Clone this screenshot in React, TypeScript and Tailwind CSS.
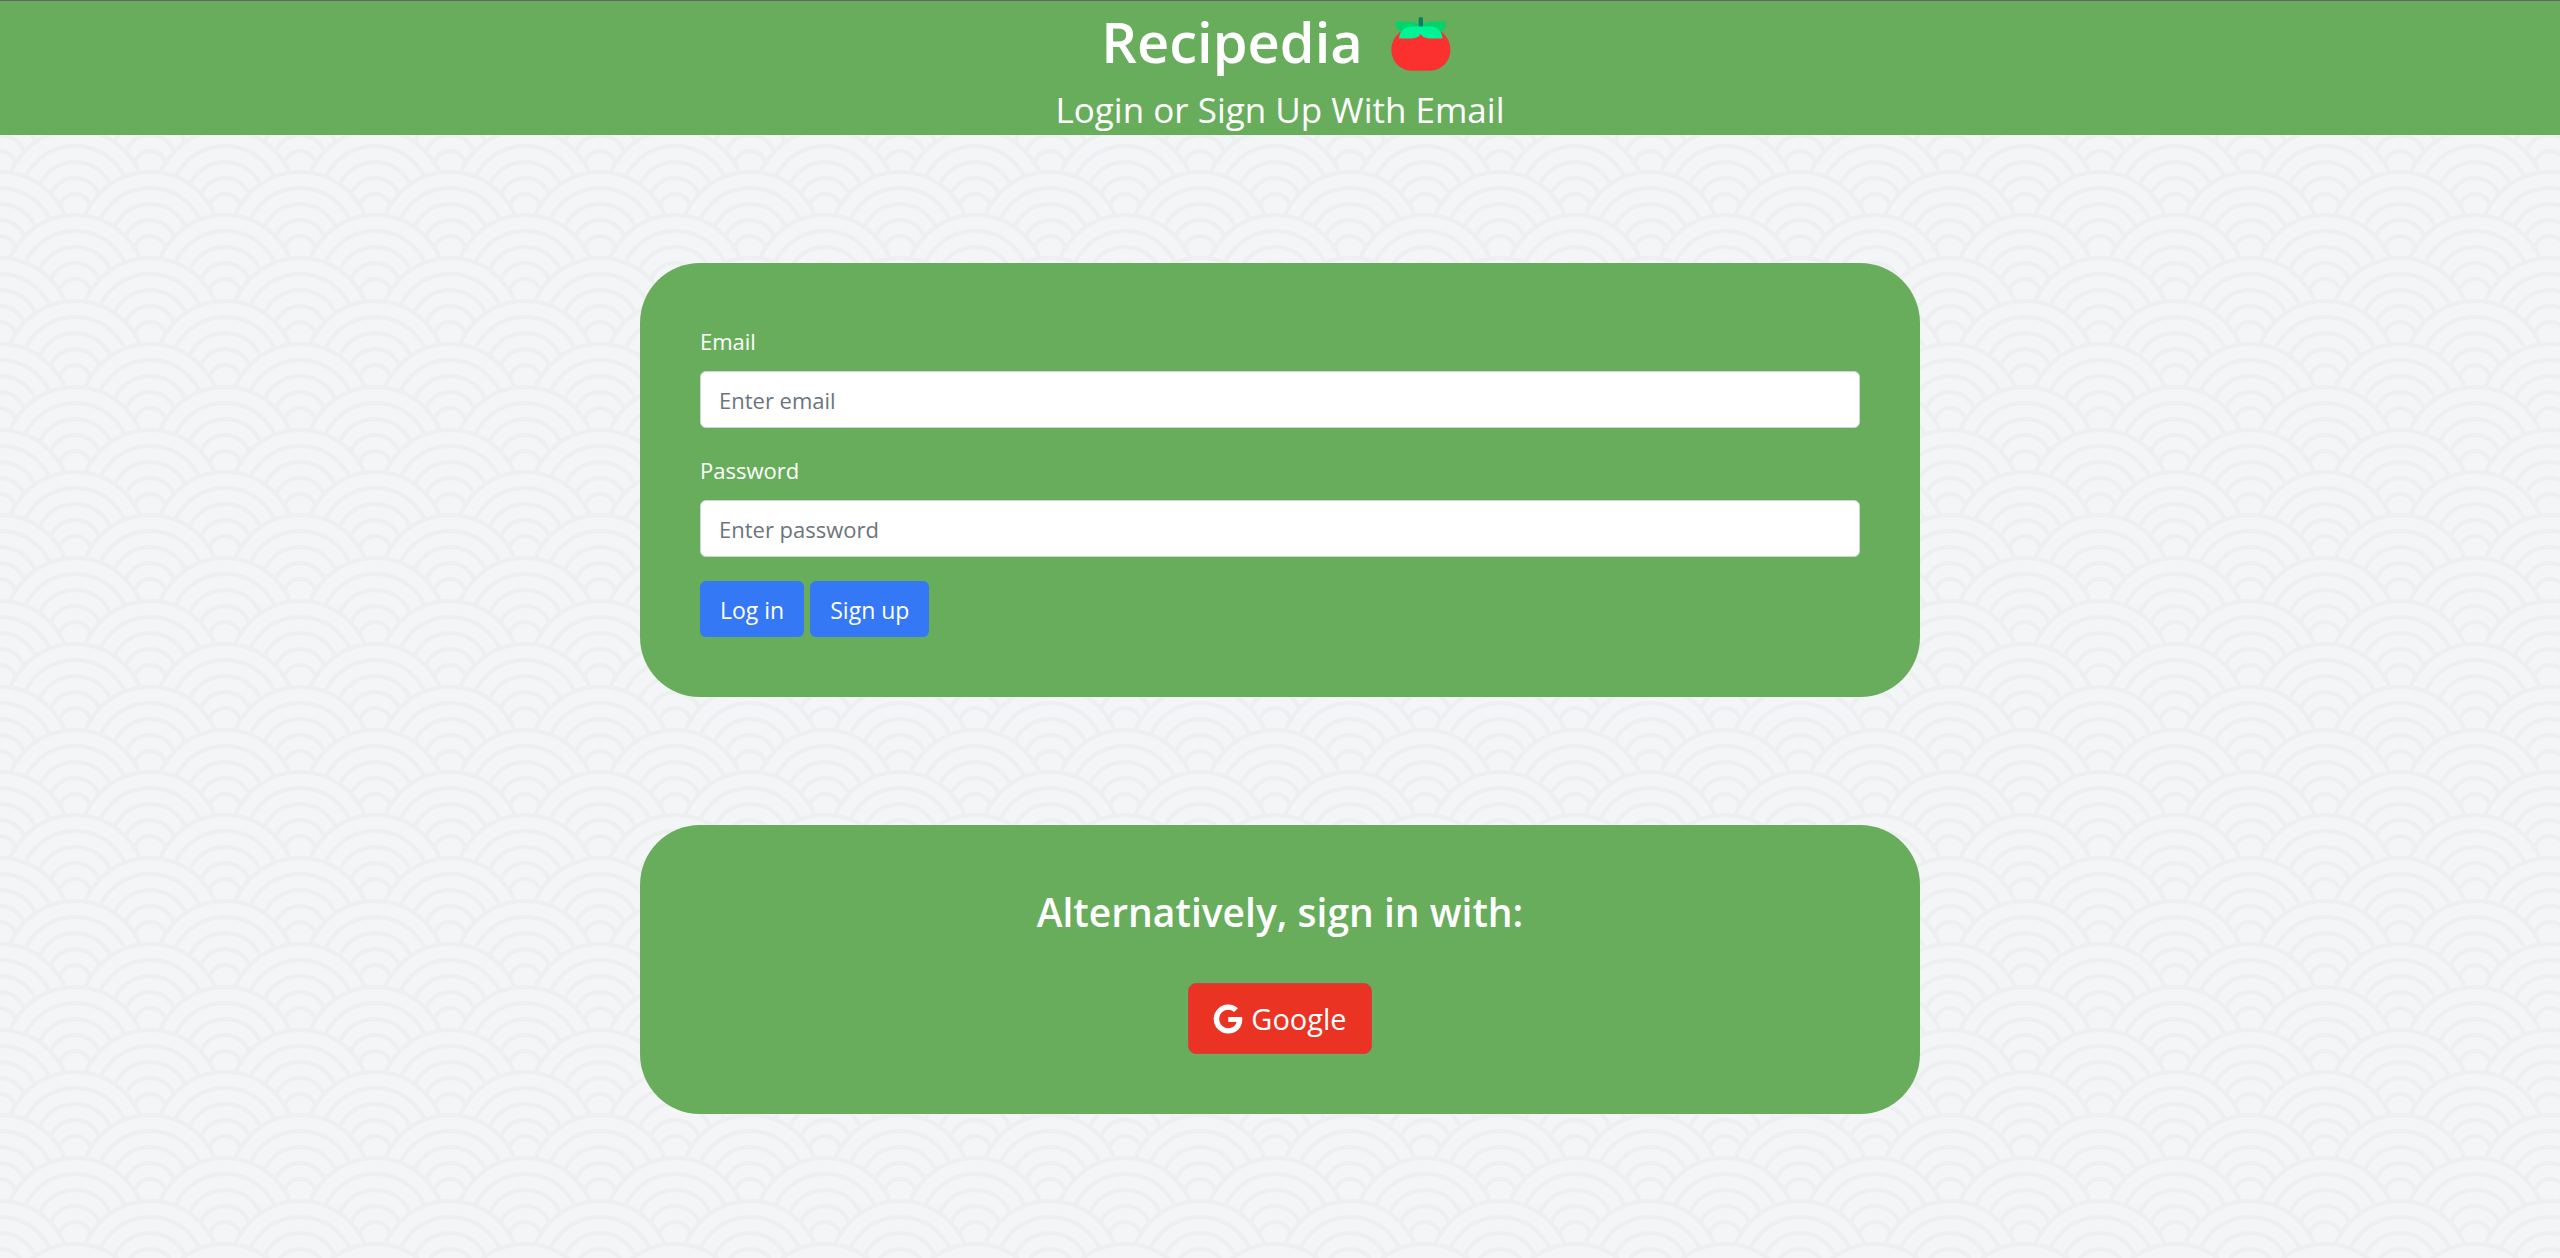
import { useId } from "react";
import type { ButtonHTMLAttributes, InputHTMLAttributes, ReactNode } from "react";
import { FaGoogle } from "react-icons/fa";

// One scale is five nested arcs; r is the arc's radius and cy its centre below the crest.
const RINGS = [
  { r: 70, cy: 70 },
  { r: 55, cy: 71 },
  { r: 39, cy: 71 },
  { r: 26, cy: 74 },
  { r: 16, cy: 80 },
];

// A 600px tile holds 14 staggered rows of scales, 150px apart.
const ROWS = Array.from({ length: 18 }, (_, i) => i - 3);
const COLUMNS = [-1, 0, 1, 2, 3, 4];

function WaveBackground() {
  const id = useId();
  return (
    <svg aria-hidden="true" className="absolute inset-0 -z-10 h-full w-full">
      <defs>
        <pattern id={id} width="600" height="600" patternUnits="userSpaceOnUse">
          {ROWS.map((row) => {
            const top = Math.round((row * 600) / 14) + 1;
            const shift = row % 2 === 0 ? 0 : 75;
            return COLUMNS.map((col) =>
              RINGS.map((ring) => (
                <circle
                  key={`${row}-${col}-${ring.r}`}
                  cx={col * 150 + shift}
                  cy={top + ring.cy}
                  r={ring.r}
                  fill="#f3f5f7"
                  stroke="#eeeff1"
                  strokeWidth="4"
                />
              )),
            );
          })}
        </pattern>
      </defs>
      <rect width="100%" height="100%" fill={`url(#${id})`} />
    </svg>
  );
}

function Tomato() {
  return (
    <svg aria-hidden="true" viewBox="92 53 178 160" className="mt-1.5 h-[54px] w-[60px]">
      <path fill="#FA312F" d="M153 88h56c34 0 59 28 59 62s-26 62-60 62h-55c-34 0-60-28-60-62s26-62 60-62z" />
      <path fill="#00D46A" d="M105 66h42c16 0 29 8 33 22c4-14 17-22 33-22h43c0 12-5 23-12 29H118c-8-6-13-17-13-29z" />
      <rect x="174" y="53" width="13" height="38" rx="6" fill="#008463" />
      <path fill="#00F397" d="M153 81h56c20 0 36 16 36 36h-29c-17 0-31-4-36-14c-5 10-18 14-35 14h-29c0-20 16-36 37-36z" />
    </svg>
  );
}

function Field({ label, id, ...rest }: { label: string; id: string } & InputHTMLAttributes<HTMLInputElement>) {
  return (
    <div className="mb-6">
      <label htmlFor={id} className="mb-3 block">
        {label}
      </label>
      <input
        id={id}
        className="block h-[57px] w-full rounded-md border border-[#ced4da] bg-white px-[18px] text-[#212529] placeholder:text-[#6c757d] placeholder:opacity-100"
        {...rest}
      />
    </div>
  );
}

function PrimaryButton({ children, ...rest }: ButtonHTMLAttributes<HTMLButtonElement>) {
  return (
    <button className="h-14 rounded-md bg-[#3478f6] px-5 pt-0.5 text-[23px] hover:bg-blue-600" {...rest}>
      {children}
    </button>
  );
}

function Card({ children }: { children: ReactNode }) {
  return <section className="mx-auto my-[5%] w-1/2 rounded-[60px] bg-[#68ad5c] p-[60px]">{children}</section>;
}

export default function App() {
  return (
    <div className="relative isolate flex min-h-screen flex-col bg-[#f3f5f7] font-['Open_Sans','Noto_Sans',sans-serif] text-[22px] leading-9 text-white">
      <WaveBackground />
      <header className="border-t border-[#666666] bg-[#68ad5c] text-center">
        <h1 className="flex h-20 items-center justify-center gap-7 pr-2 text-[56px] leading-none font-semibold">
          Recipedia
          <Tomato />
        </h1>
        <p className="pt-1 text-[35px] leading-[50px]">Login or Sign Up With Email</p>
      </header>
      <main className="flow-root">
        <Card>
          <form onSubmit={(event) => event.preventDefault()}>
            <Field label="Email" id="email" type="email" placeholder="Enter email" />
            <Field label="Password" id="password" type="password" placeholder="Enter password" />
            <div className="flex gap-1.5">
              <PrimaryButton type="submit">Log in</PrimaryButton>
              <PrimaryButton type="button">Sign up</PrimaryButton>
            </div>
          </form>
        </Card>
        <Card>
          <div className="flex flex-col items-center gap-[46px]">
            <h2 className="pt-0.5 text-[39px] leading-[50px] font-semibold">Alternatively, sign in with:</h2>
            <button
              type="button"
              className="flex h-[71px] items-center gap-2 rounded-lg border border-[#cb444a] bg-[#ea3323] px-6 text-[29px] hover:bg-red-700"
            >
              <FaGoogle aria-hidden="true" className="size-[30px]" />
              Google
            </button>
          </div>
        </Card>
      </main>
    </div>
  );
}
